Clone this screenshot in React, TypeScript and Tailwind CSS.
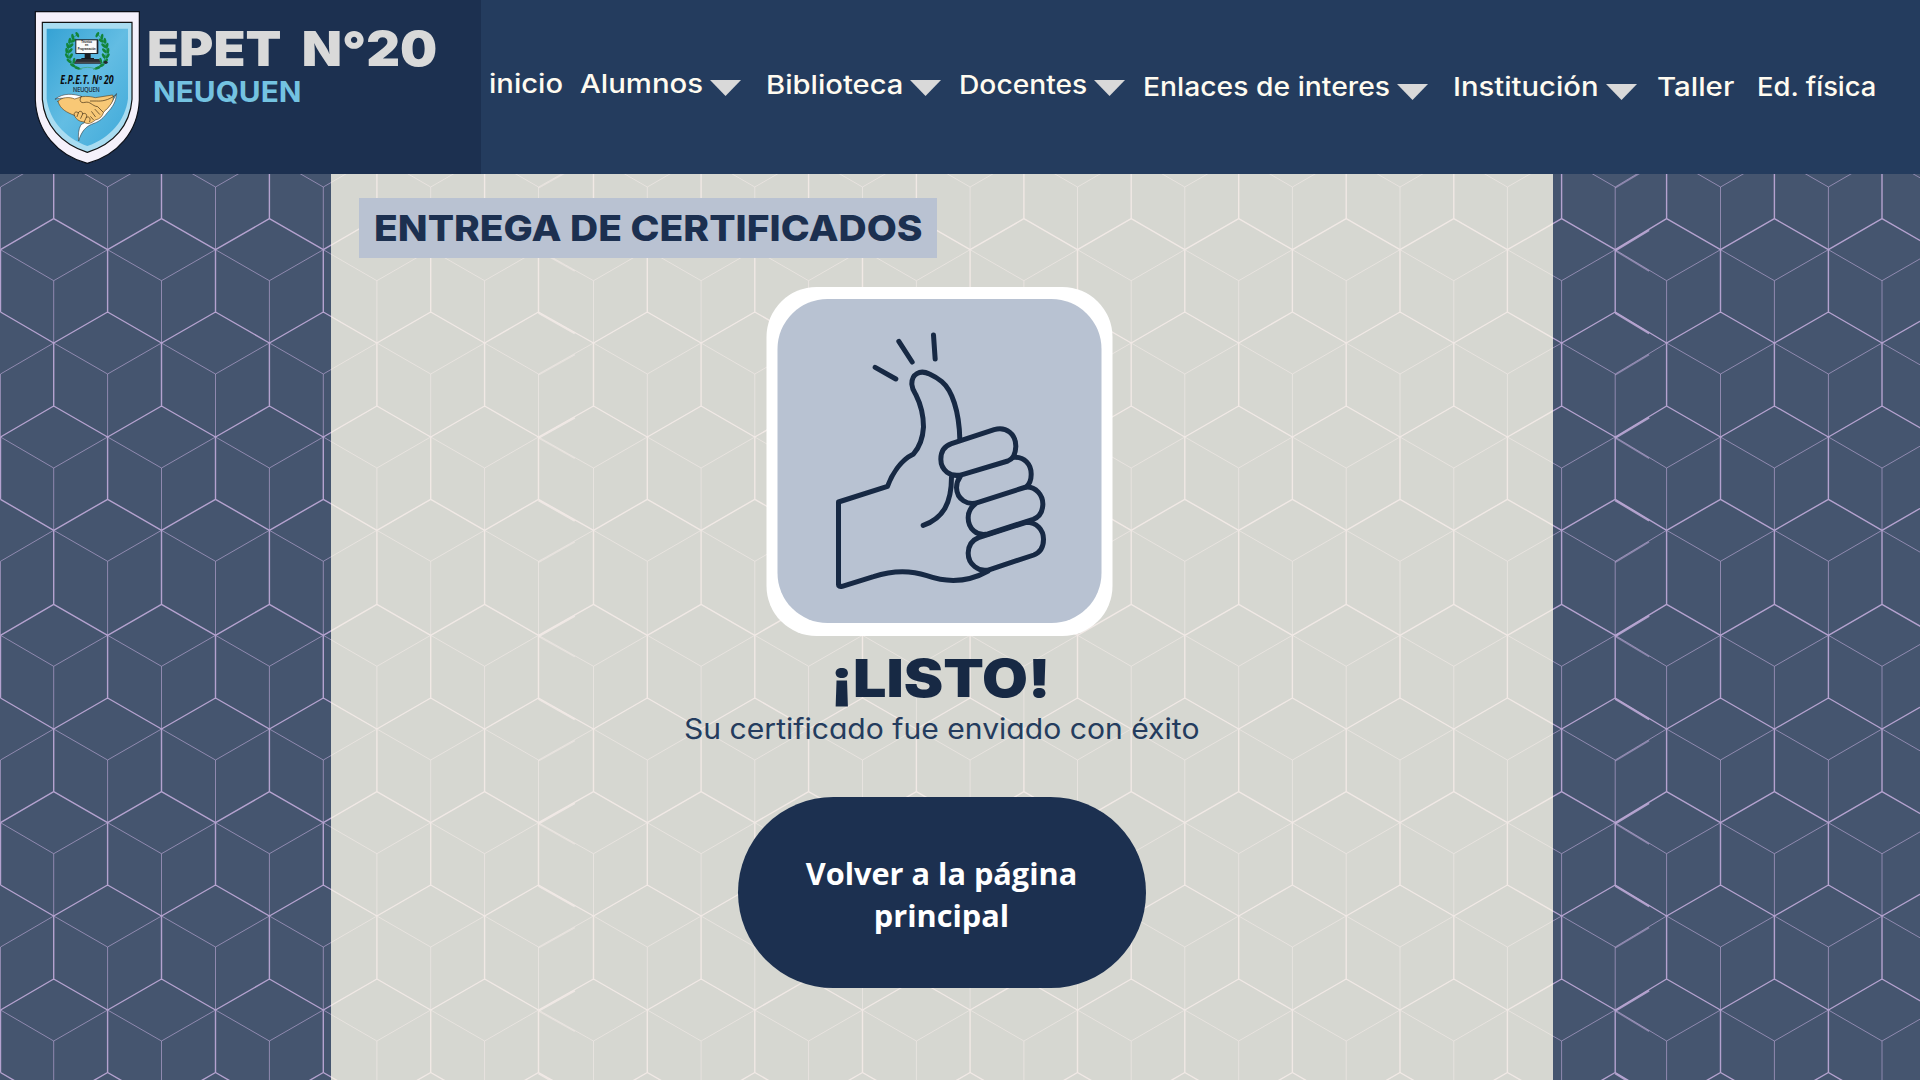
import { useLayoutEffect, useRef, useState, type ReactNode } from "react";

const columns = [
  0.5, 53.7, 107.6, 161.5, 215.5, 269.4, 323.3, 376.9, 430.7, 484.6, 538.5, 593.5, 647.3, 701.1, 754.8, 808.6, 862.5,
  916.4, 970.1, 1023.9, 1077.5, 1131.2, 1184.8, 1238.7, 1292.4, 1346.2, 1400, 1453.8, 1507.4, 1561.6, 1615.2, 1666.6,
  1720.5, 1774.4, 1828.4, 1882, 1936,
];
const rows = [156, 249.7, 343, 437, 530.3, 635.3, 729, 822.7, 916, 1010, 1103.5];
const seams = [10, 30];

/* Builds the isometric cube lattice: strong roof edges, faint floor edges. */
function buildLattice() {
  let strong = "";
  let faint = "";
  let seamStrong = "";
  let seamFaint = "";
  rows.forEach((y, r) => {
    const parity = r % 2 === 0 ? 1 : 0;
    const next = rows[r + 1] ?? 1200;
    columns.forEach((x, c) => {
      const joint = c % 2 === parity;
      if (joint) strong += `M${x} ${y}V${next - 31}`;
      else faint += `M${x} ${y + 31}V${next}`;
      const right = columns[c + 1];
      if (right === undefined) return;
      const up = joint ? y - 31 : y;
      const from = joint ? y : y - 31;
      strong += `M${x} ${from}L${right} ${up}`;
      const lowFrom = joint ? y : y + 31;
      const lowTo = joint ? y + 31 : y;
      faint += `M${x} ${lowFrom}L${right} ${lowTo}`;
      if (seams.includes(c)) {
        const t = 0.66;
        const sx = x + (right - x) * t;
        seamStrong += `M${x} ${from + 1}L${sx} ${from + 1 + (up - from) * t}`;
        seamFaint += `M${x} ${lowFrom + 1}L${sx} ${lowFrom + 1 + (lowTo - lowFrom) * t}`;
      }
    });
  });
  return { strong, faint, seamStrong, seamFaint };
}
const lattice = buildLattice();

function Lattice({ className }: { className: string }) {
  return (
    <svg className={className} width="1920" height="1080" viewBox="0 0 1920 1080" fill="none" stroke="currentColor">
      <path d={lattice.faint} strokeWidth="0.95" opacity="0.68" />
      <path d={lattice.strong} strokeWidth="1.4" opacity="0.96" />
      <path d={lattice.seamFaint} strokeWidth="1.4" opacity="0.6" />
      <path d={lattice.seamStrong} strokeWidth="2" opacity="0.9" />
    </svg>
  );
}

/* Stretches a single line of text to the given width. */
function Fit({ width, className = "", children }: { width: number; className?: string; children: ReactNode }) {
  const ref = useRef<HTMLSpanElement>(null);
  const [scale, setScale] = useState(1);
  useLayoutEffect(() => {
    if (ref.current) setScale(width / ref.current.offsetWidth);
  }, [width]);
  return (
    <span className={`block shrink-0 whitespace-nowrap ${className}`} style={{ width }}>
      <span ref={ref} className="inline-block origin-left" style={{ transform: `scaleX(${scale})` }}>
        {children}
      </span>
    </span>
  );
}

const navItems = [
  { label: "inicio", width: 74, item: "ml-[8px]", text: "mt-[71px]", arrow: "" },
  { label: "Alumnos", width: 123, item: "ml-[17px]", text: "mt-[71px]", arrow: "mt-[80px] ml-[7.5px]" },
  { label: "Biblioteca", width: 137, item: "ml-[25px]", text: "mt-[72px]", arrow: "mt-[80px] ml-[6.5px]" },
  { label: "Docentes", width: 128, item: "ml-[18.5px]", text: "mt-[72px]", arrow: "mt-[80px] ml-[7px]" },
  { label: "Enlaces de interes", width: 247, item: "ml-[18px]", text: "mt-[74px]", arrow: "mt-[84px] ml-[6.5px]" },
  { label: "Institución", width: 146, item: "ml-[25px]", text: "mt-[74px]", arrow: "mt-[84px] ml-[7px]" },
  { label: "Taller", width: 77, item: "ml-[20px]", text: "mt-[74px]", arrow: "" },
  { label: "Ed. física", width: 119, item: "ml-[23px]", text: "mt-[74px]", arrow: "" },
];

const leaves = [
  [172, 104, -30], [158, 110, -10], [149, 122, 10], [143, 137, -15], [140, 152, -5], [141, 168, -35], [147, 183, -50],
  [158, 196, -60], [172, 204, -75], [160, 122, 60], [153, 137, 50], [151, 152, 45], [153, 168, 30], [162, 182, 10],
];

function Leaves() {
  return (
    <g fill="#12853a">
      {leaves.map(([x, y, a], i) => (
        <ellipse key={i} cx={x} cy={y} rx="4.2" ry="9" transform={`rotate(${a} ${x} ${y})`} />
      ))}
      <path d="M176 102C135 120 132 190 184 208" fill="none" stroke="#12853a" strokeWidth="2" />
    </g>
  );
}

function Crest() {
  return (
    <svg className="ml-5 h-[170px] w-[130px] shrink-0" viewBox="0 0 390 510">
      <defs>
        <linearGradient id="sky" x1="0" y1="0" x2="1" y2="1">
          <stop offset="0" stopColor="#35a2d4" />
          <stop offset="0.5" stopColor="#63bde3" />
          <stop offset="1" stopColor="#3fa9d9" />
        </linearGradient>
      </defs>
      <path d="M46 35H358V300C354 395 292 467 202 490C113 467 50 395 46 300Z" fill="#f5f1fb" stroke="#0b0f18" strokeWidth="3.5" />
      <path d="M67 67H336V298C330 375 282 432 202 457C124 432 73 375 67 298Z" fill="#a9dcf1" stroke="#111" strokeWidth="3.5" />
      <path d="M80 86H324V296C316 360 272 413 202 438C134 413 88 360 80 296Z" fill="url(#sky)" />
      <Leaves />
      <g transform="translate(404 0) scale(-1 1)">
        <Leaves />
      </g>
      <path d="M178 207Q202 197 228 207" fill="none" stroke="#39a36a" strokeWidth="2" />
      <path d="M194 160H212V174H222V180H184V174H194Z" fill="#1a1c20" />
      <rect x="166" y="118" width="69" height="44" rx="2" fill="#20242a" />
      <rect x="169" y="121" width="61" height="38" fill="#fafafa" />
      <g fontFamily="Liberation Sans, sans-serif" fontWeight="700" fontSize="8.5" textAnchor="middle" fill="#111">
        <text x="200" y="130">Técnico</text>
        <text x="200" y="139">en</text>
        <text x="200" y="149" textLength="54" lengthAdjust="spacingAndGlyphs">Programación</text>
      </g>
      <path d="M170 177H237L243 191H162Z" fill="#2b2d33" />
      <path d="M166 187H243" stroke="#666" strokeWidth="2" />
      <ellipse cx="257" cy="187" rx="6" ry="5" fill="#24262b" />
      <text x="121" y="251" textLength="160" lengthAdjust="spacingAndGlyphs" fontFamily="Open Sans, sans-serif" fontWeight="700" fontStyle="italic" fontSize="36" fill="#0b0b0d">
        E.P.E.T. Nº 20
      </text>
      <text x="159" y="275" textLength="80" lengthAdjust="spacingAndGlyphs" fontFamily="Open Sans, sans-serif" fontSize="23" fill="#16202b" stroke="#16202b" strokeWidth="0.6">
        NEUQUEN
      </text>
      <g strokeLinejoin="round" strokeLinecap="round">
        <path d="M106 297C130 278 160 281 184 289C177 299 168 304 158 305C146 293 122 293 106 297Z" fill="#fff" stroke="#222" strokeWidth="1.5" />
        <path d="M289 282C289 305 277 322 262 338C244 362 232 366 222 370C198 378 184 394 176 423C174 404 175 388 183 374L240 342C263 330 279 303 289 282Z" fill="#fff" stroke="#222" strokeWidth="1.5" />
        <path d="M114 304C124 291 149 290 164 297L186 290C201 288 214 290 226 293L278 285C286 300 268 321 251 336C247 349 240 357 226 360C213 371 202 374 192 366C177 365 167 357 163 346C142 338 120 328 114 304Z" fill="#f8c876" stroke="#5b3a12" strokeWidth="1.8" />
        <path d="M184 289C176 301 181 311 195 307C211 303 216 318 233 320L249 336M286 286C262 302 246 304 229 303L211 303" fill="none" stroke="#3d2a12" strokeWidth="2" />
        <path d="M163 346C160 338 168 332 175 339C177 331 188 333 188 342C195 337 203 343 199 352C207 348 213 355 209 365M175 339L171 350M188 342L182 355M199 352L193 365M215 335L226 350M225 328L239 343M212 350L220 359" fill="none" stroke="#3d2a12" strokeWidth="2" />
      </g>
    </svg>
  );
}

function ThumbsUp() {
  return (
    <svg className="size-full" viewBox="52 57 972 972" fill="none" stroke="#172944" strokeWidth="15" strokeLinecap="round" strokeLinejoin="round">
      <path d="M345 262L407 297M416 184L456 246M520 165L525 237" />
      <path d="M599 478C597 392 575 330 545 305C531 293 519 287 508 282C479 268 454 282 455 313C456 327 461 334 467 344C482 374 490 405 490 441C488 475 480 500 459 523C421 541 395 585 382 619L235 666V914Q235 921 246 919L340 890C385 875 440 867 500 887C560 908 625 906 684 873" />
      <path d="M574 592C574 668 550 715 489 736" />
      <path d="M574 491L702 449C739 439 767 462 767 499C766 522 760 537 743 543L609 583C569 595 542 569 542 538C542 515 553 498 574 491Z" />
      <path d="M760 532C792 529 814 553 813 584C813 600 808 612 798 621L654 667C622 678 590 658 589 623C589 608 594 598 601 588" />
      <path d="M798 621C827 620 849 645 848 674C847 696 838 711 819 718L683 762C650 770 624 745 624 713C624 694 632 682 645 672" />
      <path d="M798 727C830 727 850 749 850 778C850 802 839 818 821 825L691 868C654 880 624 851 624 819C625 796 637 780 655 773L798 727" />
    </svg>
  );
}

export default function App() {
  return (
    <div className="relative flex h-[1080px] w-[1920px] flex-col overflow-hidden bg-[#45556f] font-['Inter',sans-serif]">
      <Lattice className="absolute top-0 left-0 text-[#b9a6d3]" />

      <header className="relative flex h-[174px] shrink-0 bg-[#243c5e]">
        <div className="flex w-[480.5px] shrink-0 bg-[#1c3050]">
          <Crest />
          <div className="-ml-[3.5px] flex flex-col pt-[25px]">
            <Fit width={290} className="text-[48px] leading-none font-black text-[#d9d9d9] [word-spacing:9px]">EPET N°20</Fit>
            <Fit width={148} className="mt-[4.5px] ml-[6px] text-[28px] leading-none font-bold text-[#74c3e1]">NEUQUEN</Fit>
          </div>
        </div>
        <nav className="flex items-start text-[26px] leading-none font-medium text-[#fffbf0]">
          {navItems.map(({ label, width, item, text, arrow }) => (
            <a key={label} className={`flex shrink-0 items-start ${item}`}>
              <Fit width={width} className={text}>{label}</Fit>
              {arrow && (
                <svg className={`h-4 w-[31px] shrink-0 ${arrow}`} viewBox="0 0 31 16">
                  <path d="M0 0H31L15.5 16Z" fill="#d9d9d9" />
                </svg>
              )}
            </a>
          ))}
        </nav>
      </header>

      <main className="relative ml-[330.5px] flex w-[1222px] grow flex-col items-center overflow-hidden bg-[#d6d7d1]">
        <Lattice className="absolute -top-[174px] -left-[330.5px] text-[#f1e9e6]" />

        <h1 className="relative mt-6 ml-[28.5px] flex h-[60px] w-[577.5px] shrink-0 items-center self-start bg-[#b9c2d2] pl-[14.5px] text-[36px] leading-none font-extrabold text-[#1c3050]">
          <Fit width={548}>ENTREGA DE CERTIFICADOS</Fit>
        </h1>

        <div className="relative mt-[29px] h-[349px] w-[346px] shrink-0 -translate-x-[2.5px] rounded-[50px] bg-white pt-3 pl-[11px]">
          <div className="size-[324px] rounded-[50px] bg-[#b8c2d2]">
            <ThumbsUp />
          </div>
        </div>

        <h2 className="relative mt-[17px] shrink-0 -translate-x-[1.5px] text-[52px] leading-none font-black text-[#172944]">
          <Fit width={220}>¡LISTO!</Fit>
        </h2>
        <p className="relative mt-[9.5px] shrink-0 text-[28px] leading-none text-[#243c5e] [font-feature-settings:'cv11']">
          <Fit width={515}>Su certificado fue enviado con éxito</Fit>
        </p>

        <button className="relative mt-[54.5px] flex h-[191px] w-[408px] shrink-0 items-center justify-center rounded-full bg-[#1c3050] pt-[3px] text-center font-['Open_Sans',sans-serif] text-[30.7px] leading-[42px] font-bold text-white">
          Volver a la página
          <br />
          principal
        </button>
      </main>
    </div>
  );
}
